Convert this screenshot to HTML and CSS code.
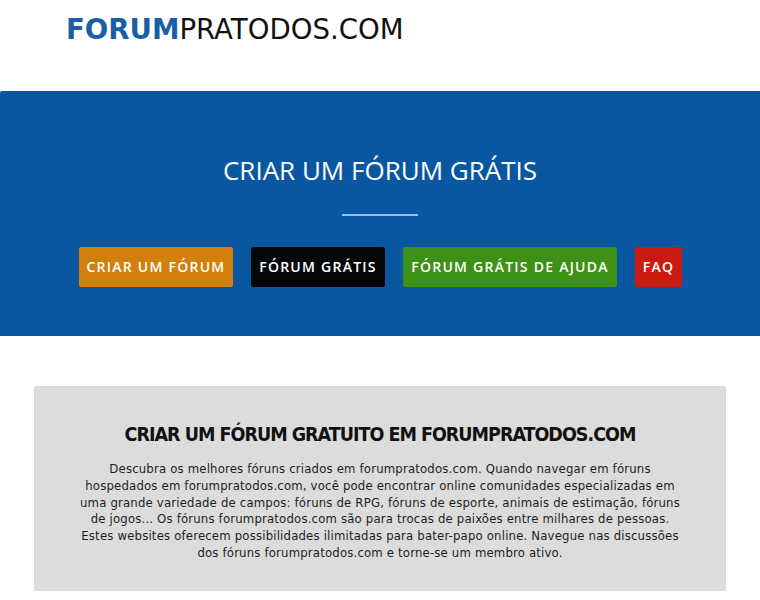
FILE: index.html
```html
<!DOCTYPE html>
<html lang="pt">
<head>
<meta charset="utf-8">
<title>forumpratodos.com</title>
<link rel="stylesheet" href="styles.css">
</head>
<body>
<header class="top">
  <div class="logo"><span class="logo-a">FORUM</span><span class="logo-b">PRATODOS.COM</span></div>
</header>
<section class="hero">
  <h1 class="hero-title">CRIAR UM FÓRUM GRÁTIS</h1>
  <div class="hero-rule"></div>
  <nav class="buttons">
    <a class="btn btn-orange">CRIAR UM FÓRUM</a>
    <a class="btn btn-black">FÓRUM GRÁTIS</a>
    <a class="btn btn-green">FÓRUM GRÁTIS DE AJUDA</a>
    <a class="btn btn-red">FAQ</a>
  </nav>
</section>
<section class="info">
  <h2 class="info-title">CRIAR UM FÓRUM GRATUITO EM FORUMPRATODOS.COM</h2>
  <p class="info-text">Descubra os melhores fóruns criados em forumpratodos.com. Quando navegar em fóruns<br>hospedados em forumpratodos.com, você pode encontrar online comunidades especializadas em<br>uma grande variedade de campos: fóruns de RPG, fóruns de esporte, animais de estimação, fóruns<br>de jogos... Os fóruns forumpratodos.com são para trocas de paixões entre milhares de pessoas.<br>Estes websites oferecem possibilidades ilimitadas para bater-papo online. Navegue nas discussões<br>dos fóruns forumpratodos.com e torne-se um membro ativo.</p>
</section>
</body>
</html>
```
FILE: styles.css
```css
html, body {
  margin: 0;
  padding: 0;
  background: #ffffff;
}
body {
  font-family: "DejaVu Sans", sans-serif;
}
.top {
  height: 91px;
  padding: 14px 0 0 66px;
  box-sizing: border-box;
}
.logo {
  font-family: "DejaVu Sans", sans-serif;
  font-size: 27.6px;
  line-height: 32px;
  letter-spacing: 0;
}
.logo-a {
  color: #1a5fa6;
  font-weight: bold;
}
.logo-b {
  color: #111111;
}
.hero {
  background: #0957a0;
  height: 245px;
  box-sizing: border-box;
  padding-top: 63px;
  display: flex;
  flex-direction: column;
  align-items: center;
  border-top-left-radius: 2px;
}
.hero-title {
  margin: 0;
  font-family: "Open Sans", sans-serif;
  font-weight: normal;
  font-size: 26px;
  line-height: 32px;
  color: #ffffff;
}
.hero-rule {
  width: 76px;
  height: 2px;
  background: #8fc6e6;
  margin-top: 28px;
}
.buttons {
  display: flex;
  gap: 18px;
  margin-top: 31px;
  margin-left: 1px;
}
.btn {
  display: block;
  height: 40px;
  line-height: 40px;
  padding: 0;
  border-radius: 2px;
  color: #ffffff;
  font-family: "Open Sans", sans-serif;
  font-weight: 600;
  font-size: 14px;
  letter-spacing: 1.25px;
  box-sizing: border-box;
  text-align: center;
  white-space: nowrap;
}
.btn-orange { background: #d27f0b; width: 154px; }
.btn-black { background: #050608; width: 134px; }
.btn-green { background: #3d9117; width: 214px; }
.btn-red { background: #cc1a10; width: 47px; }
.info {
  background: #dcdcdc;
  margin: 50px 34px 0 34px;
  height: 205px;
  box-sizing: border-box;
  padding-top: 36px;
  text-align: center;
}
.info-title {
  margin: 0;
  font-family: "DejaVu Sans Condensed", "DejaVu Sans", sans-serif;
  font-stretch: condensed;
  font-weight: bold;
  font-size: 19.5px;
  line-height: 26px;
  letter-spacing: -1px;
  color: #111111;
}
.info-text {
  margin: 13px 0 0 0;
  white-space: nowrap;
  font-family: "DejaVu Sans Condensed", "DejaVu Sans", sans-serif;
  font-stretch: condensed;
  font-size: 13px;
  line-height: 16.8px;
  letter-spacing: 0.18px;
  color: #1c1c1c;
}
```
